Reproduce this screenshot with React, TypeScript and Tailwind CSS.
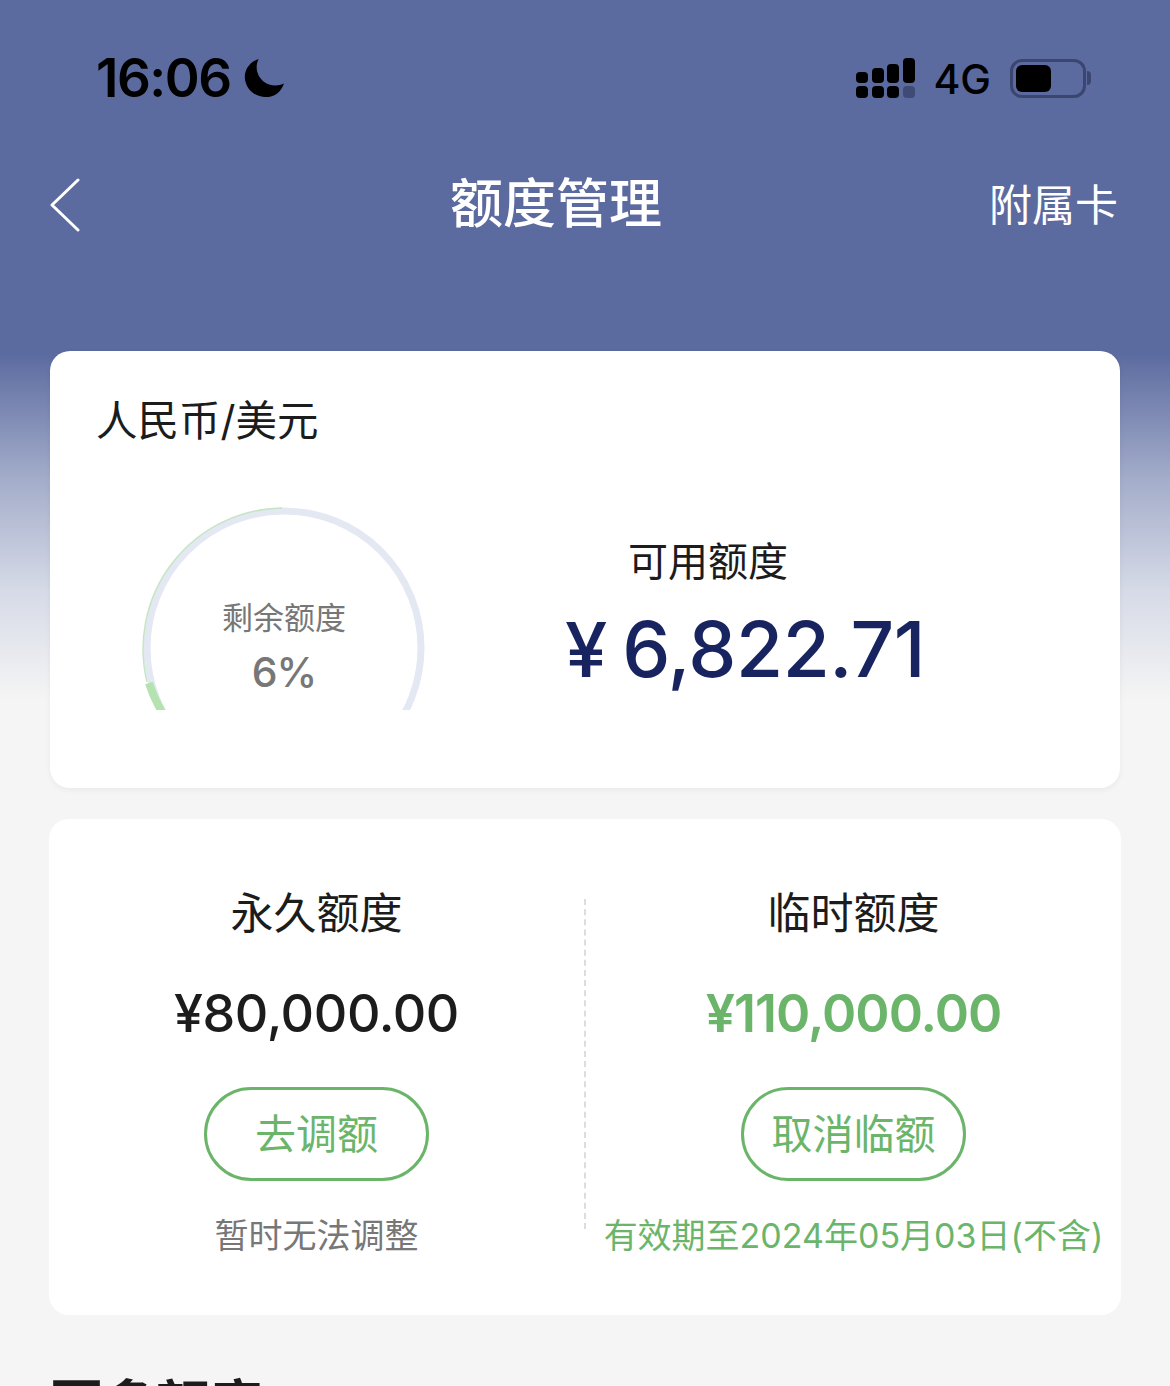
const cjk = "font-['Inter','Noto_Sans_CJK_SC',sans-serif]";

function StatusBar() {
  return (
    <div className="flex h-[157px] items-start justify-between pl-[96px] pr-[79px] pt-[48px]">
      <div className="flex items-center gap-[13px]">
        <span className="text-[53px] font-semibold leading-[60px] tracking-[-1.5px] text-black">16:06</span>
        <svg width="41" height="41" viewBox="0 0 42 42" className="mt-[1px]">
          <path d="M15 1 C4 5 0 14 1 22 C3 34 13 40 22 40 C31 40 38 35 41 26 C35 29 26 29 20 24 C13 18 11 9 15 1 Z" fill="#000" />
        </svg>
      </div>
      <div className="flex items-center pt-[6px]">
        <svg width="60" height="42" viewBox="0 0 60 42">
          <rect x="0" y="15" width="12" height="11" rx="4" fill="#000" />
          <rect x="16" y="11" width="12" height="15" rx="4" fill="#000" />
          <rect x="31" y="7" width="12" height="19" rx="4" fill="#000" />
          <rect x="47" y="1" width="12" height="25" rx="4" fill="#000" />
          <rect x="0" y="29" width="12" height="12" rx="4" fill="#000" />
          <rect x="16" y="29" width="12" height="12" rx="4" fill="#000" />
          <rect x="31" y="29" width="12" height="12" rx="4" fill="#000" />
          <rect x="47" y="29" width="12" height="12" rx="4" fill="#3f4a75" />
        </svg>
        <span className="ml-[17px] mt-[2px] text-[41px] font-medium leading-[46px] text-black">4G</span>
        <div className="ml-[19px] flex h-[39px] w-[76px] items-center rounded-[12px] border-[3px] border-[#3b4670] p-[3px]">
          <div className="h-[27px] w-[35px] rounded-[6px] bg-black" />
        </div>
        <div className="ml-[1px] h-[14px] w-[4px] rounded-r-full bg-[#3b4670]" />
      </div>
    </div>
  );
}

function NavBar() {
  return (
    <div className="relative flex h-[96px] items-center justify-between pl-[50px] pr-[52px]">
      <svg width="30" height="54" viewBox="0 0 30 54" fill="none">
        <path d="M28 2 L2 27 L28 52" stroke="#fff" strokeWidth="3" strokeLinecap="round" strokeLinejoin="round" />
      </svg>
      <h1 className="absolute left-[450px] top-[16px] text-[53px] font-medium leading-[62px] text-white">额度管理</h1>
      <span className="text-[43px] leading-[50px] text-white">附属卡</span>
    </div>
  );
}

function Gauge() {
  return (
    <div className="relative h-[203px] w-[284px] overflow-hidden">
      <svg width="284" height="203" viewBox="0 0 284 203" fill="none">
        <circle cx="142" cy="141" r="137" stroke="#e4e8f2" strokeWidth="7" />
        <path d="M5 175 A141 141 0 0 1 140 1" stroke="#c5e6c3" strokeWidth="1.5" />
        <path d="M7 176 A137 137 0 0 0 20 205" stroke="#b5e3b0" strokeWidth="8" />
      </svg>
      <div className="absolute inset-x-0 top-[91px] flex flex-col items-center">
        <span className="text-[31px] leading-[40px] text-[#777777]">剩余额度</span>
        <span className="mt-[11px] text-[41px] font-medium leading-[46px] tracking-[-1px] text-[#777777]">6%</span>
      </div>
    </div>
  );
}

function LimitColumn(props: {
  title: string;
  amount: string;
  action: string;
  note: string;
  green?: boolean;
}) {
  return (
    <div className="flex w-[535px] shrink-0 flex-col items-center">
      <span className="text-[43px] leading-[54px] text-[#1c1c1c]">{props.title}</span>
      <span
        className={
          props.green
            ? "mt-[42px] text-[52px] font-semibold leading-[64px] tracking-[-1px] text-[#6bb56b]"
            : "mt-[42px] text-[52px] font-medium leading-[64px] tracking-[-0.4px] text-[#1c1c1c]"
        }
      >
        {props.amount}
      </span>
      <div className="mt-[41px] flex h-[94px] w-[225px] items-center justify-center rounded-full border-[3px] border-[#6bb56b] pt-[2px] text-[41px] text-[#6bb56b]">
        {props.action}
      </div>
      <span
        className={
          props.green
            ? "mt-[33px] whitespace-nowrap text-[34px] leading-[44px] text-[#6bb56b]"
            : "mt-[33px] whitespace-nowrap text-[34px] leading-[44px] text-[#777777]"
        }
      >
        {props.note}
      </span>
    </div>
  );
}

export default function App() {
  return (
    <div className={`h-[1386px] w-[1170px] overflow-hidden bg-[#f5f5f5] ${cjk}`}>
      <div className="h-[730px] bg-[linear-gradient(to_bottom,#5b6a9f_0,#5b6a9f_352px,#a4adca_480px,#d6dae7_590px,#f5f5f5_700px)]">
        <StatusBar />
        <NavBar />
        <div className="mx-[50px] mt-[98px] h-[437px] rounded-[20px] bg-white pl-[46px] pt-[42px] shadow-[0_2px_6px_rgba(0,0,0,0.05)]">
          <div className="text-[41.5px] leading-[56px] text-[#1c1c1c]">人民币/美元</div>
          <div className="mt-[58px] flex items-start pl-[46px]">
            <Gauge />
            <div className="ml-[139px] flex flex-col items-start">
              <span className="ml-[63px] mt-[29px] text-[40px] leading-[52px] text-[#1c1c1c]">可用额度</span>
              <div className="mt-[15px] flex items-baseline text-[#18245f]">
                <span className="text-[76px] font-medium leading-[92px]">¥</span>
                <span className="ml-[15px] text-[76.5px] font-medium leading-[92px] tracking-[-0.5px]">6,822.71</span>
              </div>
            </div>
          </div>
        </div>
      </div>
      <div className="relative mx-[49px] mt-[89px] flex h-[496px] rounded-[20px] bg-white pt-[67px]">
        <LimitColumn title="永久额度" amount="¥80,000.00" action="去调额" note="暂时无法调整" />
        <div className="mt-[13px] h-[330px] w-0 shrink-0 border-l-2 border-dashed border-[#dddddd]" />
        <LimitColumn title="临时额度" amount="¥110,000.00" action="取消临额" note="有效期至2024年05月03日(不含)" green />
      </div>
      <div className="ml-[50px] mt-[60px] text-[53px] font-bold leading-[60px] text-[#1c1c1c]">更多额度</div>
    </div>
  );
}
